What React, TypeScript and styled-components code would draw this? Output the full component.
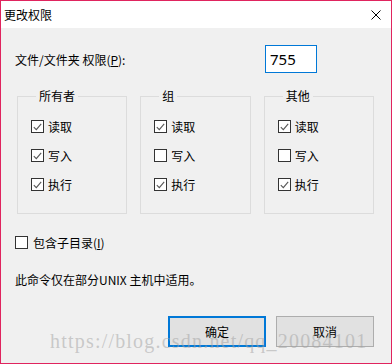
import React from "react";
import styled, { createGlobalStyle } from "styled-components";

const GlobalStyle = createGlobalStyle`
  html, body { margin: 0; padding: 0; background: #f0f0f0; }
  * { box-sizing: border-box; }
`;

const FONT = `"Noto Sans CJK SC", "Liberation Sans", sans-serif`;

const Window = styled.div`
  position: relative;
  width: 392px;
  height: 364px;
  border: 1px solid #e0245e;
  background: #f0f0f0;
  font-family: ${FONT};
  font-size: 12px;
  color: #000;
  display: flex;
  flex-direction: column;
  overflow: hidden;
`;

const TitleBar = styled.div`
  height: 27px;
  background: #fff;
  display: flex;
  align-items: center;
  justify-content: space-between;
  padding: 0 10px 0 3px;
  font-size: 12px;
`;

const CloseIcon = styled.svg`
  width: 10px;
  height: 10px;
`;

const Body = styled.div`
  flex: 1;
  display: flex;
  flex-direction: column;
  padding: 17px 17px 0 14px;
`;

const ModeRow = styled.div`
  display: flex;
  align-items: center;
  padding-right: 57px;
`;

const ModeInput = styled.div`
  margin-left: auto;
  width: 52px;
  height: 28px;
  border: 1px solid #0078d7;
  background: #fff;
  display: flex;
  align-items: center;
  padding-left: 4px;
  font-family: "Noto Sans", "Liberation Sans", sans-serif;
  font-size: 15px;
`;

const Groups = styled.div`
  display: flex;
  gap: 13px;
  margin: 15px 0 0 2px;
`;

const Group = styled.fieldset`
  width: 111px;
  margin: 0;
  padding: 8px 0 14px 13px;
  border: 1px solid #dcdcdc;
  min-width: 0;
`;

const Legend = styled.legend`
  margin-left: 5px;
  padding: 0 3px;
  height: 16px;
  line-height: 16px;
  font-size: 12px;
`;

const CheckRow = styled.label<{ $h?: number }>`
  display: flex;
  align-items: center;
  gap: 4px;
  height: ${({ $h }) => $h ?? 29}px;
`;

const Box = styled.span`
  width: 13px;
  height: 13px;
  border: 1px solid #333;
  background: #fff;
  display: flex;
  align-items: center;
  justify-content: center;
  flex-shrink: 0;
`;

const SubdirRow = styled(CheckRow)`
  margin-top: 22px;
  gap: 5px;
`;

const Note = styled.div`
  margin-top: 21px;
  height: 20px;
  line-height: 20px;
`;

const Buttons = styled.div`
  margin-top: auto;
  margin-bottom: 16px;
  display: flex;
  justify-content: flex-end;
  gap: 10px;
`;

const Button = styled.button<{ $primary?: boolean }>`
  width: 98px;
  height: 31px;
  font-family: ${FONT};
  font-size: 12px;
  color: #000;
  background: #e1e1e1;
  border: ${({ $primary }) => ($primary ? "2px solid #0078d7" : "1px solid #adadad")};
  padding: 0;
`;

const Watermark = styled.div`
  position: absolute;
  left: 49px;
  top: 329px;
  font-family: "Liberation Serif", serif;
  font-size: 20px;
  letter-spacing: 1.2px;
  color: rgba(160, 160, 160, 0.5);
  pointer-events: none;
  white-space: nowrap;
`;

const Check: React.FC<{ checked: boolean; label: React.ReactNode; h?: number }> = ({ checked, label, h }) => (
  <CheckRow $h={h}>
    <Box>
      {checked && (
        <svg width="9" height="8" viewBox="0 0 9 8">
          <path d="M0.8 4.2 L3.3 6.6 L8.2 0.9" fill="none" stroke="#555" strokeWidth="1.1" />
        </svg>
      )}
    </Box>
    {label}
  </CheckRow>
);

const groups = [
  { title: "所有者", values: [true, true, true] },
  { title: "组", values: [true, false, true] },
  { title: "其他", values: [true, false, true] },
];
const perms = ["读取", "写入", "执行"];

export default function App() {
  return (
    <>
      <GlobalStyle />
      <Window>
        <TitleBar>
          <span>更改权限</span>
          <CloseIcon viewBox="0 0 10 10">
            <path d="M0.5 0.5 L9.5 9.5 M9.5 0.5 L0.5 9.5" stroke="#000" strokeWidth="1" />
          </CloseIcon>
        </TitleBar>
        <Body>
          <ModeRow>
            <span>文件/文件夹 权限(<u>P</u>):</span>
            <ModeInput>755</ModeInput>
          </ModeRow>
          <Groups>
            {groups.map(g => (
              <Group key={g.title}>
                <Legend>{g.title}</Legend>
                {g.values.map((v, i) => (
                  <Check key={perms[i]} checked={v} label={perms[i]} />
                ))}
              </Group>
            ))}
          </Groups>
          <SubdirRow $h={13}>
            <Box />
            <span>包含子目录(<u>I</u>)</span>
          </SubdirRow>
          <Note>此命令仅在部分UNIX 主机中适用。</Note>
          <Buttons>
            <Button $primary>确定</Button>
            <Button>取消</Button>
          </Buttons>
        </Body>
        <Watermark>https://blog.csdn.net/qq_20084101</Watermark>
      </Window>
    </>
  );
}
